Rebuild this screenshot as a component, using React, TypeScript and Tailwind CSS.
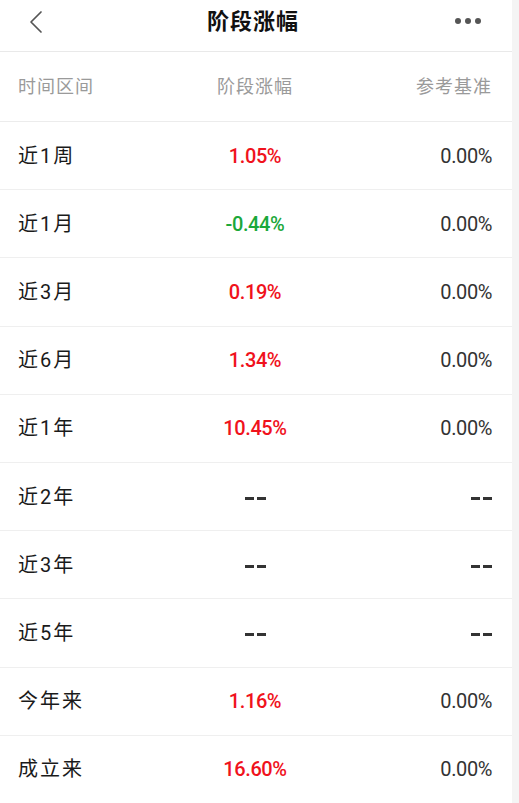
import React from 'react';

type Row = { label: string; change: string; bench: string };

const rows: Row[] = [
  { label: '近1周', change: '1.05%', bench: '0.00%' },
  { label: '近1月', change: '-0.44%', bench: '0.00%' },
  { label: '近3月', change: '0.19%', bench: '0.00%' },
  { label: '近6月', change: '1.34%', bench: '0.00%' },
  { label: '近1年', change: '10.45%', bench: '0.00%' },
  { label: '近2年', change: '--', bench: '--' },
  { label: '近3年', change: '--', bench: '--' },
  { label: '近5年', change: '--', bench: '--' },
  { label: '今年来', change: '1.16%', bench: '0.00%' },
  { label: '成立来', change: '16.60%', bench: '0.00%' },
];

const changeColor = (v: string) => {
  if (v === '--') return 'text-[#333]';
  if (v.startsWith('-')) return 'text-[#1ba83a]';
  return 'text-[#f0121c]';
};

// empty value shown as two short dashes
const Value = ({ v }: { v: string }) =>
  v === '--' ? (
    <span className="inline-flex gap-[3px] items-center align-middle">
      <span className="w-[9px] h-[2.5px] bg-[#333]" />
      <span className="w-[9px] h-[2.5px] bg-[#333]" />
    </span>
  ) : (
    <>{v}</>
  );

export default function App() {
  return (
    <div className="flex w-[519px] h-[803px] overflow-hidden bg-white font-['Roboto','Noto_Sans_CJK_SC',sans-serif]">
      <div className="w-[512px] flex flex-col">
        {/* top bar */}
        <div className="h-[52px] shrink-0 flex items-center justify-between border-b border-[#e9e9e9] pl-[27px] pr-[31px]">
          <svg width="18" height="24" viewBox="0 0 18 24" fill="none" className="-mt-[8px]">
            <path d="M14 2 L4 12 L14 22" stroke="#555" strokeWidth="1.7" strokeLinecap="round" strokeLinejoin="round" />
          </svg>
          <h1 className="text-[22px] tracking-[1px] font-bold text-[#111] -mt-[9px] ml-[6px]">阶段涨幅</h1>
          <div className="flex gap-[4px] -mt-[9px]">
            <span className="w-[6px] h-[6px] rounded-full bg-[#555]" />
            <span className="w-[6px] h-[6px] rounded-full bg-[#555]" />
            <span className="w-[6px] h-[6px] rounded-full bg-[#555]" />
          </div>
        </div>

        {/* column titles */}
        <div className="h-[70px] shrink-0 grid grid-cols-3 items-center border-b border-[#ececec] pl-[18px] pr-[20px] text-[18px] tracking-[1px] text-[#9a9a9a]">
          <span>时间区间</span>
          <span className="text-center">阶段涨幅</span>
          <span className="text-right">参考基准</span>
        </div>

        {rows.map((r) => (
          <div
            key={r.label}
            className="h-[68.2px] shrink-0 grid grid-cols-3 items-center border-b border-[#efefef] pl-[18px] pr-[20px] text-[20px] tracking-[-0.4px]"
          >
            <span className="tracking-[2px] text-[#1a1a1a]">{r.label}</span>
            <span className={`text-center font-medium ${changeColor(r.change)}`}>
              <Value v={r.change} />
            </span>
            <span className="text-right text-[#333]">
              <Value v={r.bench} />
            </span>
          </div>
        ))}
      </div>
      <div className="flex-1 bg-[#f4f4f4]" />
    </div>
  );
}
